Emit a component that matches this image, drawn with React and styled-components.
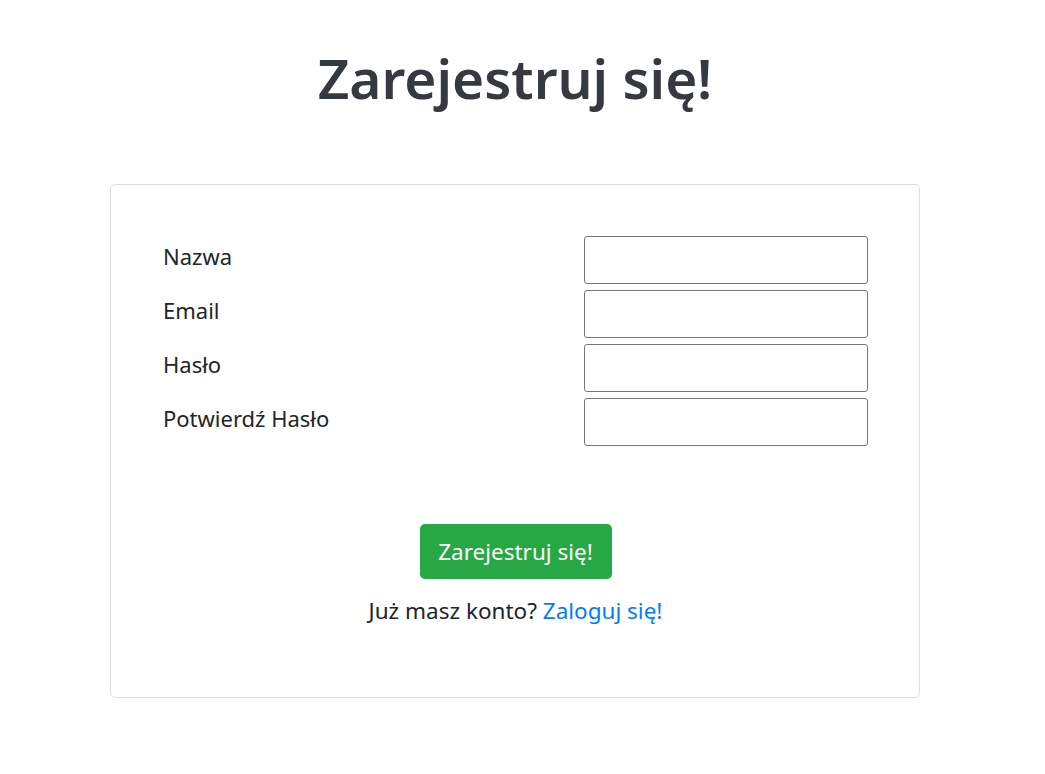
import React, { useState } from 'react'
import styled, { createGlobalStyle } from 'styled-components'

const GlobalStyle = createGlobalStyle`
  body {
    margin: 0;
    background: #fff;
    font-family: 'Noto Sans', 'Open Sans', sans-serif;
    color: #212529;
  }
`

const Page = styled.div`
  width: 1030px;
  padding-top: 45px;
`
const Title = styled.h1`
  margin: 0 0 73px;
  text-align: center;
  font-size: 55px;
  font-weight: 600;
  line-height: 1.2;
  color: #343a40;
`
const Card = styled.form`
  width: 810px;
  box-sizing: border-box;
  margin: 0 auto;
  border: 1px solid #dfdfdf;
  border-radius: 5px;
  padding: 51px 51px 70px 52px;
  display: flex;
  flex-direction: column;
  align-items: center;
`
const Fields = styled.div`
  width: 100%;
  display: grid;
  grid-template-columns: 1fr 284px;
  row-gap: 6px;
`
const Label = styled.label`
  font-size: 22px;
  line-height: 30px;
  padding-top: 5px;
`
const Input = styled.input`
  height: 48px;
  box-sizing: border-box;
  border: 1px solid #767676;
  border-radius: 3px;
  padding: 0 8px;
  font: inherit;
  font-size: 18px;
`
const Submit = styled.button`
  margin-top: 78px;
  width: 192px;
  height: 55px;
  border: none;
  border-radius: 5px;
  background: #28a745;
  color: #fff;
  font-family: inherit;
  font-size: 22.5px;
  cursor: pointer;
`
const Footer = styled.p`
  margin: 16px 0 0;
  font-size: 22.5px;
  line-height: 32px;
`
const Link = styled.a`
  color: #007bff;
  text-decoration: none;
`

const fields = [
  { id: 'name', label: 'Nazwa', type: 'text' },
  { id: 'email', label: 'Email', type: 'email' },
  { id: 'password', label: 'Hasło', type: 'password' },
  { id: 'confirm', label: 'Potwierdź Hasło', type: 'password' },
]

export default function App() {
  const [values, setValues] = useState({})

  return (
    <>
      <GlobalStyle />
      <Page>
        <Title>Zarejestruj się!</Title>
        <Card onSubmit={e => e.preventDefault()}>
          <Fields>
            {fields.map(f => (
              <React.Fragment key={f.id}>
                <Label htmlFor={f.id}>{f.label}</Label>
                <Input
                  id={f.id}
                  type={f.type}
                  value={values[f.id] || ''}
                  onChange={e => setValues({ ...values, [f.id]: e.target.value })}
                />
              </React.Fragment>
            ))}
          </Fields>
          <Submit type='submit'>Zarejestruj się!</Submit>
          <Footer>
            Już masz konto? <Link href='#'>Zaloguj się!</Link>
          </Footer>
        </Card>
      </Page>
    </>
  )
}
